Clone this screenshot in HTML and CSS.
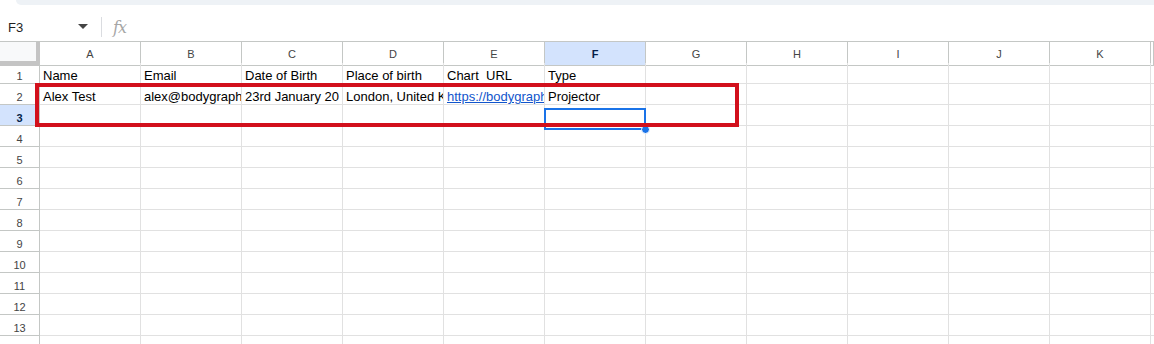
FILE: index.html
```html
<!doctype html>
<html lang="en">
  <head>
    <title>Sheet</title>
    <meta charset="UTF-8">
    <link rel="stylesheet" href="styles.css">
  </head>
  <body>
    <div class="topbar"></div>
    <div class="formulaBar">
      <div class="nameBox">
        <span>F3</span>
        <svg class="caret" width="10" height="6" viewBox="0 0 10 6"><path d="M0 0h10L5 5z" fill="#444"/></svg>
      </div>
      <div class="sep"></div>
      <div class="fx">fx</div>
    </div>

    <div class="sheet">
      <div class="grid">
        <div class="corner"></div>
        <div class="colHead">A</div>
        <div class="colHead">B</div>
        <div class="colHead">C</div>
        <div class="colHead">D</div>
        <div class="colHead">E</div>
        <div class="colHead sel">F</div>
        <div class="colHead">G</div>
        <div class="colHead">H</div>
        <div class="colHead">I</div>
        <div class="colHead">J</div>
        <div class="colHead">K</div>
        <div class="colHead"></div>

        <div class="rowHead">1</div>
        <div class="cell">Name</div>
        <div class="cell">Email</div>
        <div class="cell">Date of Birth</div>
        <div class="cell">Place of birth</div>
        <div class="cell">Chart&nbsp; URL</div>
        <div class="cell">Type</div>
        <div class="cell"></div><div class="cell"></div><div class="cell"></div><div class="cell"></div><div class="cell"></div><div class="cell"></div>

        <div class="rowHead">2</div>
        <div class="cell">Alex Test</div>
        <div class="cell">alex@bodygraph</div>
        <div class="cell">23rd January 20</div>
        <div class="cell">London, United K</div>
        <div class="cell"><span class="link">https://bodygraph</span></div>
        <div class="cell">Projector</div>
        <div class="cell"></div><div class="cell"></div><div class="cell"></div><div class="cell"></div><div class="cell"></div><div class="cell"></div>

        <div class="rowHead sel">3</div>
        <div class="cell"></div><div class="cell"></div><div class="cell"></div><div class="cell"></div><div class="cell"></div>
        <div class="cell"></div>
        <div class="cell"></div><div class="cell"></div><div class="cell"></div><div class="cell"></div><div class="cell"></div><div class="cell"></div>
      </div>
      <div id="moreRows" class="grid"></div>

      <div class="active"><span class="handle"></span></div>
      <div class="annotation"></div>
    </div>

    <script>
      // empty rows 4..13, plus the cut-off top of row 14
      var more = document.getElementById('moreRows');
      for (var r = 4; r <= 14; r++) {
        var html = '<div class="rowHead">' + (r < 14 ? r : '') + '</div>';
        for (var c = 0; c < 12; c++) html += '<div class="cell"></div>';
        more.insertAdjacentHTML('beforeend', html);
      }
    </script>
  </body>
</html>
```

FILE: styles.css
```css
body {
  margin: 0;
  width: 1154px;
  height: 344px;
  overflow: hidden;
  background: #fff;
  font-family: "Liberation Sans", Arial, sans-serif;
  color: #000;
}

.topbar {
  height: 5px;
  margin-left: 16px;
  background: #eef2f6;
  border-bottom-left-radius: 8px;
}

.formulaBar {
  height: 36px;
  display: flex;
  align-items: center;
}

.nameBox {
  width: 92px;
  display: flex;
  align-items: center;
  justify-content: space-between;
  padding: 0 8px 0 8px;
  box-sizing: border-box;
  font-size: 13px;
  color: #1f1f1f;
  margin-top: 8px;
}

.caret {
  margin-right: -4px;
}

.sep {
  width: 1px;
  height: 20px;
  background: #dadce0;
  margin: 8px 0 0 9px;
}

.fx {
  margin: 8px 0 0 11px;
  font-family: "DejaVu Serif", serif;
  font-style: italic;
  font-size: 16px;
  color: #a6a6a6;
  letter-spacing: -1px;
}

.sheet {
  position: relative;
  border-top: 1px solid #c4c7c5;
}

.grid {
  display: grid;
  grid-template-columns: 40px repeat(11, 101px) 3px;
  grid-auto-rows: 21px;
}

.grid > div {
  box-sizing: border-box;
  border-right: 1px solid #e1e1e1;
  border-bottom: 1px solid #e1e1e1;
  overflow: hidden;
  white-space: nowrap;
}

.grid > .corner {
  height: 24px;
  background: #f8f9fa;
  border-right: 4px solid #c4c4c4;
  border-bottom: 5px solid #c4c4c4;
}

.grid > .colHead {
  height: 24px;
  border-color: #c4c7c5;
  font-size: 11px;
  color: #444;
  text-align: center;
  line-height: 25px;
}

.grid > .rowHead {
  border-color: #c4c7c5;
  font-size: 11px;
  color: #444;
  text-align: center;
  line-height: 20px;
  padding-top: 3px;
}

.grid > .sel {
  background: #d3e3fd;
  color: #041e49;
  font-weight: bold;
}

.grid > .cell {
  font-size: 13px;
  line-height: 20px;
  padding: 3px 0 0 3px;
  text-overflow: clip;
}

.link {
  color: #1155cc;
  text-decoration: underline;
}

.active {
  position: absolute;
  left: 544px;
  top: 66px;
  width: 102px;
  height: 22px;
  box-sizing: border-box;
  border: 2px solid #1a73e8;
}

.handle {
  position: absolute;
  right: -6px;
  bottom: -6px;
  width: 7px;
  height: 7px;
  border-radius: 50%;
  background: #1a73e8;
  border: 1px solid #fff;
}

.annotation {
  position: absolute;
  left: 35px;
  top: 41px;
  width: 704px;
  height: 44px;
  box-sizing: border-box;
  border: 4px solid #d2101c;
}
```
